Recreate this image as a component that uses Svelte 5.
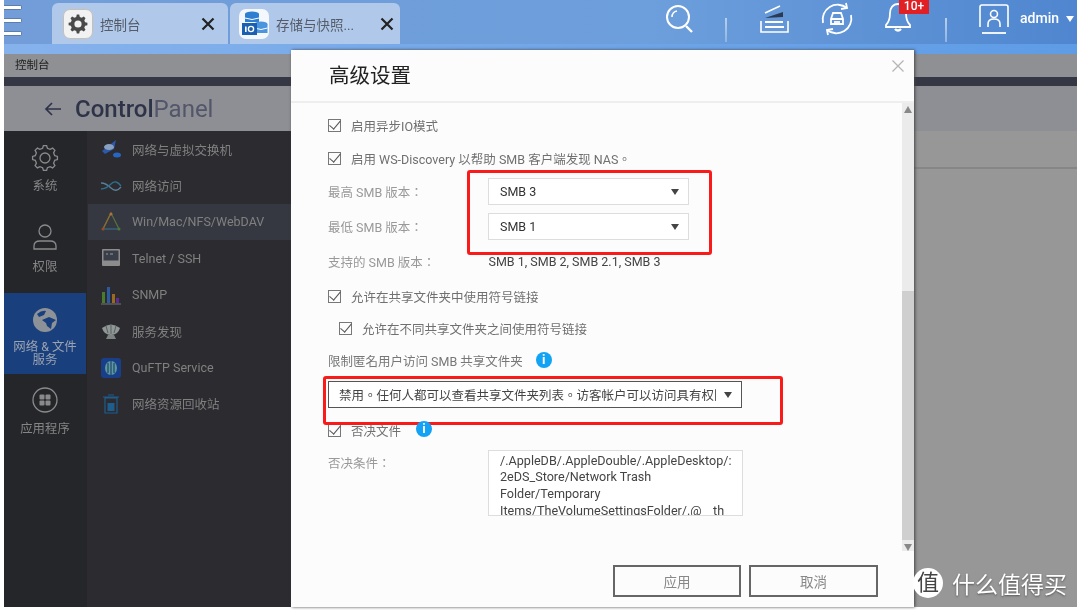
<script>
	// gear outline, used by the tab icon and the sidebar
	function gear(cx, cy, outer, inner, teeth) {
		let pts = [];
		let step = (Math.PI * 2) / teeth;
		for (let i = 0; i < teeth; i++) {
			let a = i * step;
			[[-0.3, inner], [-0.16, outer], [0.16, outer], [0.3, inner]].forEach(([k, r]) => {
				let t = a + k * step * 1.05;
				pts.push((cx + r * Math.cos(t)).toFixed(1) + "," + (cy + r * Math.sin(t)).toFixed(1));
			});
		}
		return pts.join(" ");
	}

	let subItems = [
		{ label: "网络与虚拟交换机", icon: "vswitch" },
		{ label: "网络访问", icon: "access" },
		{ label: "Win/Mac/NFS/WebDAV", icon: "win", active: true },
		{ label: "Telnet / SSH", icon: "telnet" },
		{ label: "SNMP", icon: "snmp" },
		{ label: "服务发现", icon: "discover" },
		{ label: "QuFTP Service", icon: "ftp" },
		{ label: "网络资源回收站", icon: "bin" }
	];
</script>

<div class="page" lang="zh-Hant">
	<div class="desk">
		<header class="topbar">
			<div class="burger"><span></span><span></span><span></span></div>
			<div class="tab first">
				<div class="tabicon gearbox">
					<svg width="24" height="24" viewBox="0 0 24 24">
						<polygon points={gear(12, 12, 9.5, 7.3, 8)} fill="#4a4a4a" />
						<circle cx="12" cy="12" r="3.6" fill="#f2f2f2" />
					</svg>
				</div>
				<span class="tabname">控制台</span>
				<svg class="tabx" width="14" height="14" viewBox="0 0 14 14"><path d="M1.5 1.5L12.5 12.5M12.5 1.5L1.5 12.5" stroke="#222" stroke-width="2.2" /></svg>
			</div>
			<div class="tab second">
				<div class="tabicon storebox">
					<svg width="30" height="30" viewBox="0 0 30 30">
						<ellipse cx="13" cy="5" rx="7" ry="2.6" fill="#2f7fd0" />
						<rect x="6" y="5" width="14" height="8" fill="#2f7fd0" />
						<path d="M6 9q7 3 14 0" stroke="#fff" fill="none" />
						<ellipse cx="22" cy="15" rx="6.5" ry="2.4" fill="#4a95de" />
						<rect x="15.5" y="15" width="13" height="9" fill="#4a95de" />
						<path d="M15.5 19q6.5 3 13 0" stroke="#fff" fill="none" />
						<rect x="3" y="14" width="15" height="12" fill="#1a5fb0" />
						<rect x="6" y="17.500" width="1.600" height="5.500" fill="#fff" />
						<circle cx="12" cy="20" r="2.600" fill="none" stroke="#fff" stroke-width="1.400" />
					</svg>
				</div>
				<span class="tabname">存储与快照...</span>
				<svg class="tabx" width="14" height="14" viewBox="0 0 14 14"><path d="M1.5 1.5L12.5 12.5M12.5 1.5L1.5 12.5" stroke="#222" stroke-width="2.2" /></svg>
			</div>
			<div class="tools">
				<svg class="t-search" width="30" height="30" viewBox="0 0 30 30" fill="none" stroke="#fff">
					<circle cx="13" cy="13" r="11" stroke-width="2" />
					<path d="M21 22l6 6" stroke-width="2.400" />
					<path d="M7 13a6 6 0 0 1 5-6" stroke-width="1.600" />
				</svg>
				<i class="sep s1"></i>
				<svg class="t-stack" width="30" height="30" viewBox="0 0 30 30" fill="none" stroke="#fff" stroke-width="1.600">
					<path d="M2 18v11h27V18" />
					<path d="M6 24h19M6 19h18" stroke-width="1.800" />
					<path d="M6 10l15-7" />
					<path d="M6 15l18-6v5z" fill="#2b3a52" stroke="none" />
				</svg>
				<svg class="t-sync" width="34" height="34" viewBox="0 0 34 34" fill="none" stroke="#fff" stroke-width="1.800">
					<path d="M3 21A15 15 0 0 1 27 6" />
					<path d="M31 13A15 15 0 0 1 7 28" />
					<path d="M21 7l6-1-1-5M13 27l-6 1 1 5" />
					<path d="M11 17l2-6h8l2 6v5H11zM11 17h12" />
					<path d="M14 20h6" />
				</svg>
				<svg class="t-bell" width="28" height="32" viewBox="0 0 28 32" fill="none" stroke="#fff" stroke-width="1.800">
					<path d="M13 3c-5 0-8 4-8 9 0 6-1 9-4 12v2h24v-2c-3-3-4-6-4-12 0-5-3-9-8-9z" />
					<path d="M10 28q3 3 6 0" stroke-width="2.400" />
				</svg>
				<span class="badge">10+</span>
				<i class="sep s2"></i>
				<svg class="t-user" width="30" height="30" viewBox="0 0 30 30" fill="none" stroke="#fff" stroke-width="1.600">
					<path d="M1 23V3q0-2 2-2h24q2 0 2 2v20" />
					<circle cx="15" cy="10" r="3.500" />
					<path d="M9 23v-3q0-5 6-5t6 5v3" />
					<path d="M3 29h24" stroke-width="1.800" />
				</svg>
				<span class="who">admin</span>
				<i class="caret white"></i>
			</div>
		</header>
		<div class="strip"></div>
		<div class="crumb">控制台</div>
		<div class="darkline"></div>
		<div class="panelhead">
			<svg width="18" height="16" viewBox="0 0 18 16" fill="none" stroke="#2e3348" stroke-width="1.700"><path d="M17 8H2M8 2L2 8l6 6" /></svg>
			<span class="brand"><b>Control</b>Panel</span>
		</div>
		<div class="panelbody">
			<nav class="side">
				<div class="sideitem sys">
					<svg width="28" height="28" viewBox="0 0 28 28"><polygon points={gear(14, 14, 12.5, 10, 8)} fill="none" stroke="#8a8a8a" stroke-width="1.300" /><circle cx="14" cy="14" r="5" fill="none" stroke="#8a8a8a" stroke-width="1.300" /></svg>
					<span>系统</span>
				</div>
				<div class="sideitem perm">
					<svg width="26" height="28" viewBox="0 0 26 28" fill="none" stroke="#8a8a8a" stroke-width="1.300"><circle cx="13" cy="8" r="6" /><path d="M2 26v-3q0-5 6-5h10q6 0 6 5v3z" /></svg>
					<span>权限</span>
				</div>
				<div class="sideitem net">
					<svg width="26" height="26" viewBox="0 0 26 26"><circle cx="13" cy="13" r="12" fill="#8d9298" /><path d="M5 7q5-4 9-3l-2 4-5 2zM10 13l7-3 7 3-4 3-1 6-4-3-1-3z" fill="#1a3f7d" /></svg>
					<span>网络 & 文件<br />服务</span>
				</div>
				<div class="sideitem apps">
					<svg width="26" height="26" viewBox="0 0 26 26"><circle cx="13" cy="13" r="12" fill="none" stroke="#8a8a8a" stroke-width="1.300" /><g fill="#8a8a8a"><rect x="7.500" y="7.500" width="5" height="5" rx="1" /><rect x="13.500" y="7.500" width="5" height="5" rx="1" /><rect x="7.500" y="13.500" width="5" height="5" rx="1" /><rect x="13.500" y="13.500" width="5" height="5" rx="1" /></g></svg>
					<span>应用程序</span>
				</div>
			</nav>
			<div class="sub">
				{#each subItems as item}
					<div class="subitem" class:on={item.active}>
						<svg width="22" height="22" viewBox="0 0 22 22">
							{#if item.icon === "vswitch"}
								<path d="M2 13L16 2l-2 9-9 5z" fill="#2c5aa8" /><ellipse cx="9" cy="9" rx="5" ry="3" fill="#8aa0c0" /><ellipse cx="17" cy="17" rx="4" ry="2.500" fill="#2766c0" />
							{:else if item.icon === "access"}
								<path d="M1 8q5 0 10 5t10 -1" fill="none" stroke="#5b7f96" stroke-width="1.300" /><path d="M1 14q5 0 10-5t10 2" fill="none" stroke="#2f6f8e" stroke-width="1.300" />
							{:else if item.icon === "win"}
								<path d="M11 2L3 18h16z" fill="none" stroke="#5a7040" stroke-width="1.200" /><path d="M11 2L3 18" stroke="#8a6a30" stroke-width="1.200" /><path d="M3 18h16" stroke="#2a5a8a" stroke-width="1.200" /><circle cx="11" cy="3" r="1.500" fill="#b0703a" /><circle cx="3" cy="18" r="1.500" fill="#9a4a2a" /><circle cx="19" cy="18" r="1.500" fill="#4a7a3a" />
							{:else if item.icon === "telnet"}
								<rect x="2" y="2" width="18" height="17" rx="1" fill="#8c8c8c" /><rect x="3.500" y="3.500" width="15" height="10" fill="#3a3e48" /><path d="M6 7h2M10 7h3" stroke="#9a9a9a" />
							{:else if item.icon === "snmp"}
								<rect x="2" y="8" width="3" height="11" fill="#4a7a2c" /><rect x="7" y="3" width="3" height="16" fill="#2c5aa0" /><rect x="12" y="10" width="3" height="9" fill="#9a6a20" /><rect x="16" y="14" width="3" height="5" fill="#5a2c90" /><path d="M1 20h20" stroke="#777" />
							{:else if item.icon === "discover"}
								<path d="M2 8q9-7 18 0q-2 7-9 7t-9-7z" fill="#8f9896" /><path d="M8 15h6l2 4H6z" fill="#7e8482" /><path d="M6 6l2 7M11 4v10M16 6l-2 7" stroke="#5a5e60" />
							{:else if item.icon === "ftp"}
								<rect x="1" y="1" width="20" height="20" rx="3" fill="#1a3f8a" /><ellipse cx="11" cy="11" rx="6" ry="7" fill="#5a9aa0" /><path d="M11 4v14M8 6v10M14 6v10" stroke="#16305e" />
							{:else}
								<path d="M5 5h12v15H5zM3 4h16M8 2h6" fill="none" stroke="#1f5d8c" stroke-width="1.200" /><rect x="7.500" y="10" width="7" height="8" fill="#1f5d8c" />
							{/if}
						</svg>
						<span>{item.label}</span>
					</div>
				{/each}
			</div>
			<div class="rest"><div class="restline"></div></div>
		</div>
	</div>

	<section class="dialog">
		<div class="dhead">
			<h2>高级设置</h2>
			<svg width="14" height="14" viewBox="0 0 14 14"><path d="M1.500 1.500L12.500 12.500M12.500 1.500L1.500 12.500" stroke="#b5b5b5" stroke-width="1.300" /></svg>
		</div>
		<div class="dmain">
			<div class="form">
				<label class="row"><i class="check"></i>启用异步IO模式</label>
				<label class="row"><i class="check"></i>启用 WS-Discovery 以帮助 SMB 客户端发现 NAS。</label>
				<div class="row"><span class="key">最高 SMB 版本：</span><div class="pick"><span>SMB 3</span><i class="caret"></i></div></div>
				<div class="row wide"><span class="key">最低 SMB 版本：</span><div class="pick"><span>SMB 1</span><i class="caret"></i></div></div>
				<div class="row wide"><span class="key">支持的 SMB 版本：</span><span class="val">SMB 1, SMB 2, SMB 2.1, SMB 3</span></div>
				<label class="row wide"><i class="check"></i>允许在共享文件夹中使用符号链接</label>
				<label class="row tight nested"><i class="check"></i>允许在不同共享文件夹之间使用符号链接</label>
				<div class="row tight"><span class="plain">限制匿名用户访问 SMB 共享文件夹</span><i class="info">i</i></div>
				<div class="row mid"><div class="pick long"><span>禁用。任何人都可以查看共享文件夹列表。访客帐户可以访问具有权限的共享文件夹。</span><i class="caret"></i></div></div>
				<label class="row wider"><i class="check"></i>否决文件<i class="info near">i</i></label>
				<div class="row veto">
					<span class="key">否决条件：</span>
					<div class="memo">/.AppleDB/.AppleDouble/.AppleDesktop/:2eDS_Store/Network Trash Folder/Temporary Items/TheVolumeSettingsFolder/.@__th<br />umb/.@__desc/:2e*/.@__qini/.Qsync/.@upload_cache/.qsync/.qsync_sn/.@qsys/.streams/.digest</div>
				</div>
				<div class="actions">
					<button>应用</button>
					<button>取消</button>
				</div>
			</div>
			<div class="scroll">
				<i class="up"></i>
				<div class="thumb"></div>
				<i class="down"></i>
			</div>
		</div>
		<div class="redbox one"></div>
		<div class="redbox two"></div>
	</section>

	<div class="mark">
		<span class="seal">值</span>
		<span>什么值得买</span>
	</div>
</div>

<style>
	:global(body) {
		margin: 0;
		background: #fff;
	}
	.page {
		position: relative;
		width: 1080px;
		height: 610px;
		overflow: hidden;
		background: #fff;
		font-family: Roboto, "Noto Sans CJK TC", sans-serif;
		filter: blur(0.35px);
	}
	.desk {
		margin-left: 4px;
		width: 1073px;
		height: 607px;
		display: flex;
		flex-direction: column;
		overflow: hidden;
	}

	/* top bar */
	.topbar {
		height: 44px;
		display: flex;
		align-items: flex-end;
		background: linear-gradient(90deg, #729dd8, #6d9fdc 60%, #4f86cf);
		position: relative;
	}
	.burger {
		width: 18px;
		height: 44px;
		display: flex;
		flex-direction: column;
		gap: 8px;
		padding-top: 5px;
		box-sizing: border-box;
		margin-right: 30px;
	}
	.burger span {
		height: 3px;
		background: #fff;
		border: 1px solid #5c7ea8;
		border-left: 0;
		border-radius: 0 2px 2px 0;
	}
	.tab {
		width: 176px;
		height: 41px;
		background: #b0c9ea;
		border-radius: 6px 6px 0 0;
		display: flex;
		align-items: center;
		box-sizing: border-box;
		padding-left: 11px;
		margin-right: 2px;
	}
	.tab.second {
		width: 170px;
		padding-left: 9px;
	}
	.tabicon {
		width: 30px;
		height: 30px;
		border-radius: 7px;
		display: flex;
		align-items: center;
		justify-content: center;
		flex: none;
	}
	.gearbox {
		background: #f2f2f2;
		border: 1px solid #c9c0b4;
		box-sizing: border-box;
	}
	.storebox {
		background: #f4f8fd;
	}
	.tabname {
		margin-left: 7px;
		font-size: 13.500px;
		color: #555c68;
		flex: 1;
	}
	.tabx {
		margin-right: 13px;
	}
	.second .tabx {
		margin-right: 6px;
	}
	.tools {
		position: absolute;
		inset: 0;
		pointer-events: none;
	}
	.tools > * {
		position: absolute;
	}
	.t-search { left: 661px; top: 4px; }
	.t-stack { left: 755px; top: 3px; }
	.t-sync { left: 816px; top: 2px; }
	.t-bell { left: 881px; top: 1px; }
	.t-user { left: 975px; top: 4px; }
	.sep {
		top: 18px;
		width: 2px;
		height: 24px;
		background: linear-gradient(#b9d0ee, #8fb4e4);
	}
	.s1 { left: 721px; }
	.s2 { left: 941px; }
	.badge {
		left: 895px;
		top: 0;
		width: 30px;
		height: 14px;
		background: #e02024;
		color: #fff;
		font-size: 12px;
		font-weight: 500;
		line-height: 13px;
		text-align: center;
	}
	.who {
		left: 1016px;
		top: 10px;
		color: #fff;
		font-size: 14px;
		font-weight: 500;
	}
	.caret {
		width: 0;
		height: 0;
		border-left: 4.500px solid transparent;
		border-right: 4.500px solid transparent;
		border-top: 6px solid #444;
		flex: none;
	}
	.caret.white {
		left: 1062px;
		top: 16px;
		border-top-color: #fff;
	}
	.strip {
		height: 10px;
		background: linear-gradient(90deg, #86b2ec, #5e9ce6);
		flex: none;
	}
	.crumb {
		height: 23px;
		line-height: 23px;
		background: #8f9093;
		color: #222;
		font-size: 11.500px;
		padding-left: 11px;
		flex: none;
	}
	.darkline {
		height: 9px;
		background: #353744;
		flex: none;
	}
	.panelhead {
		height: 45px;
		background: #8e8f94;
		display: flex;
		align-items: center;
		padding-left: 40px;
		gap: 13px;
		flex: none;
	}
	.brand {
		font-size: 24px;
		color: #53566a;
	}
	.brand b {
		font-weight: 500;
		color: #2e3348;
	}
	.panelbody {
		flex: 1;
		display: flex;
		min-height: 0;
	}
	.side {
		width: 83px;
		background: #24262a;
		flex: none;
		display: flex;
		flex-direction: column;
	}
	.sideitem {
		display: flex;
		flex-direction: column;
		align-items: center;
		color: #858585;
		font-size: 12.400px;
		text-align: center;
		line-height: 13px;
		gap: 7px;
		width: 82px;
	}
	.sideitem.sys { margin-top: 13px; }
	.sideitem.perm { margin-top: 31px; gap: 9px; }
	.sideitem.net {
		margin-top: 20px;
		height: 81px;
		box-sizing: border-box;
		padding-top: 14px;
		background: #1a3f7d;
		color: #9aa3b0;
	}
	.sideitem.apps { margin-top: 13px; gap: 9px; }
	.sub {
		width: 204px;
		background: #2b2b30;
		flex: none;
		padding-left: 1px;
		box-sizing: border-box;
	}
	.subitem {
		height: 36.400px;
		display: flex;
		align-items: center;
		padding-left: 12px;
		gap: 10px;
		font-size: 12.500px;
		color: #808080;
	}
	.subitem.on {
		background: #353840;
	}
	.rest {
		flex: 1;
		background: #979797;
		padding-top: 36px;
	}
	.restline {
		height: 2px;
		background: #868686;
	}

	/* dialog */
	.dialog {
		position: absolute;
		left: 291px;
		top: 50px;
		width: 623px;
		height: 557px;
		background: #fcfcfc;
		box-shadow: 1px 0 3px #444;
		display: flex;
		flex-direction: column;
	}
	.dhead {
		height: 51px;
		flex: none;
		border-bottom: 2px solid #eee;
		display: flex;
		justify-content: space-between;
		padding: 0 9px 0 38px;
	}
	.dhead h2 {
		margin: 0;
		font-size: 20.500px;
		font-weight: 400;
		color: #222;
		line-height: 53px;
	}
	.dhead svg {
		margin-top: 9px;
	}
	.dmain {
		flex: 1;
		display: flex;
		min-height: 0;
	}
	.form {
		flex: 1;
		display: flex;
		flex-direction: column;
		padding: 9px 0 0 37px;
		font-size: 12.500px;
		color: #707070;
		min-width: 0;
		font-family: Roboto, "Noto Sans CJK TC", sans-serif;
		font-feature-settings: "locl" 1;
	}
	.row {
		height: 27px;
		flex: none;
		box-sizing: border-box;
		padding-bottom: 1px;
		display: flex;
		align-items: center;
		margin-bottom: 6px;
	}
	.row.wide { margin-top: 2px; }
	.row.tight { margin-top: -1px; }
	.row.mid { margin-top: 1px; }
	.row.wider { margin-top: 3px; }
	.nested {
		padding-left: 11px;
	}
	.check {
		width: 11px;
		height: 11px;
		border: 1px solid #777;
		margin-right: 10px;
		position: relative;
		flex: none;
	}
	.check::after {
		content: "";
		position: absolute;
		left: 3px;
		top: -2px;
		width: 5px;
		height: 10px;
		border: solid #555;
		border-width: 0 1.500px 1.500px 0;
		transform: rotate(40deg);
	}
	.key {
		width: 160px;
		color: #999;
		flex: none;
	}
	.plain {
		color: #777;
	}
	.val {
		color: #444;
		margin-left: 0.500px;
	}
	.pick {
		width: 201px;
		height: 27px;
		box-sizing: border-box;
		align-self: flex-start;
		border: 1px solid #ddd;
		background: #fff;
		display: flex;
		align-items: center;
		justify-content: space-between;
		padding: 0 9px 0 11px;
		color: #333;
		white-space: nowrap;
		overflow: hidden;
	}
	.pick span {
		overflow: hidden;
	}
	.pick.long {
		width: 414px;
		border-color: #555;
		padding-left: 10px;
		color: #444;
	}
	.pick.long span {
		width: 377px;
		flex: none;
		font-family: "Noto Sans CJK TC", sans-serif;
	}
	.info {
		width: 16px;
		height: 16px;
		border-radius: 50%;
		background: #12a3f5;
		color: #fff;
		font: 700 13px/16px Roboto, sans-serif;
		text-align: center;
		margin-left: 13px;
		flex: none;
		font-style: normal;
	}
	.info.near {
		margin-left: 15px;
		position: relative;
		top: -1px;
		z-index: 2;
	}
	.veto {
		height: 66px;
		align-items: flex-start;
		margin-bottom: 0;
		padding-bottom: 0;
	}
	.veto .key {
		padding-top: 3px;
	}
	.memo {
		width: 255px;
		height: 66px;
		box-sizing: border-box;
		border: 1px solid #ddd;
		background: #fff;
		color: #444;
		font-size: 12.600px;
		padding: 1.600px 6px 0 11px;
		line-height: 16.800px;
		overflow: hidden;
		word-break: break-word;
	}
	.actions {
		display: flex;
		gap: 8px;
		margin: 49px 0 0 285px;
	}
	.actions button {
		width: 128px;
		height: 32px;
		box-sizing: border-box;
		border: 2px solid #666;
		background: #fcfcfc;
		color: #888;
		font-size: 13.500px;
		font-family: inherit;
		padding: 0;
	}
	.actions button + button {
		width: 129px;
	}
	.scroll {
		width: 12px;
		flex: none;
		background: #ebebeb;
		display: flex;
		flex-direction: column;
		align-items: center;
		margin-bottom: 56px;
	}
	.up {
		margin-top: 3px;
		border-left: 4.500px solid transparent;
		border-right: 4.500px solid transparent;
		border-bottom: 7px solid #888;
	}
	.thumb {
		width: 100%;
		height: 249px;
		background: #cfcfcf;
		margin-top: 178px;
	}
	.down {
		margin-top: 4px;
		border-left: 4.500px solid transparent;
		border-right: 4.500px solid transparent;
		border-top: 7px solid #888;
	}
	.redbox {
		position: absolute;
		border: 3px solid #fb1a1a;
		border-radius: 3px;
		box-sizing: border-box;
		pointer-events: none;
	}
	.redbox.one {
		left: 176px;
		top: 120px;
		width: 245px;
		height: 85px;
	}
	.redbox.two {
		left: 32px;
		top: 326px;
		width: 460px;
		height: 49px;
	}

	/* watermark */
	.mark {
		position: absolute;
		left: 913px;
		top: 566px;
		display: flex;
		align-items: center;
		gap: 9px;
		color: #fff;
		font-size: 23px;
		text-shadow: 0 1px 2px #555;
	}
	.seal {
		width: 30px;
		height: 30px;
		border-radius: 50%;
		background: #fff;
		color: #444;
		font-size: 22px;
		line-height: 29px;
		text-align: center;
		text-shadow: none;
	}
</style>
